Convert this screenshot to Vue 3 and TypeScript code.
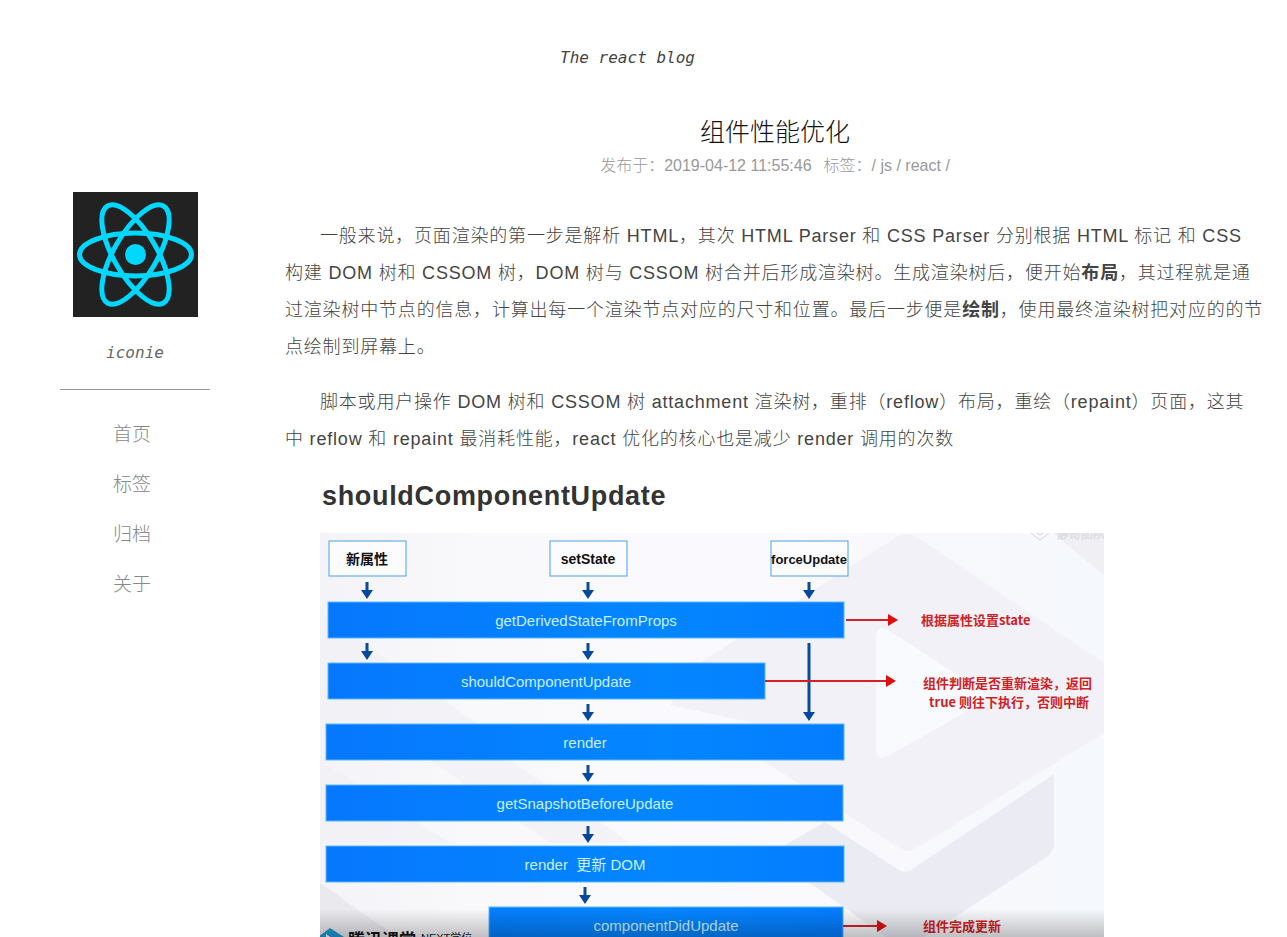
<script setup lang="ts">
interface Step {
  x: number
  y: number
  width: number
  label: string
  labelX: number
}

const navItems: string[] = ['首页', '标签', '归档', '关于']

const triggers = [
  { x: 9, label: '新属性', compact: false },
  { x: 230, label: 'setState', compact: false },
  { x: 451, label: 'forceUpdate', compact: true },
]

const steps: Step[] = [
  { x: 8, y: 69, width: 516, label: 'getDerivedStateFromProps', labelX: 266 },
  { x: 8, y: 130, width: 437, label: 'shouldComponentUpdate', labelX: 226 },
  { x: 6, y: 191, width: 518, label: 'render', labelX: 265 },
  { x: 6, y: 252, width: 517, label: 'getSnapshotBeforeUpdate', labelX: 265 },
  { x: 6, y: 313, width: 518, label: 'render  更新 DOM', labelX: 265 },
  { x: 169, y: 374, width: 354, label: 'componentDidUpdate', labelX: 346 },
]

const downArrows: [number, number][] = [
  [47, 49], [268, 49], [489, 49],
  [47, 110], [268, 110],
  [268, 171], [268, 232], [268, 293], [265, 354],
]

const redArrows: [number, number, number][] = [
  [526, 87, 578],
  [445, 148, 576],
  [523, 393, 567],
]

const notes = [
  { x: 601, y: 92, text: '根据属性设置state' },
  { x: 603, y: 155, text: '组件判断是否重新渲染，返回' },
  { x: 609, y: 174, text: 'true 则往下执行，否则中断' },
  { x: 603, y: 398, text: '组件完成更新' },
]
</script>

<template>
  <div class="page">
    <header class="site-header">The react blog</header>
    <div class="layout">
      <aside class="sidebar">
        <svg class="avatar" viewBox="0 0 125 125" role="img" aria-label="React">
          <rect width="125" height="125" fill="#222" />
          <circle cx="62.5" cy="62.5" r="10.5" fill="#00d8ff" />
          <g fill="none" stroke="#00d8ff" stroke-width="5">
            <ellipse cx="62.5" cy="62.5" rx="56" ry="21.5" />
            <ellipse cx="62.5" cy="62.5" rx="56" ry="21.5" transform="rotate(60 62.5 62.5)" />
            <ellipse cx="62.5" cy="62.5" rx="56" ry="21.5" transform="rotate(120 62.5 62.5)" />
          </g>
        </svg>
        <p class="author">iconie</p>
        <nav class="nav">
          <a v-for="item in navItems" :key="item" href="#">{{ item }}</a>
        </nav>
      </aside>
      <main class="post">
        <h1>组件性能优化</h1>
        <p class="meta">
          <span>发布于：2019-04-12 11:55:46</span>
          <span>标签：/ <a href="#">js</a> / <a href="#">react</a> /</span>
        </p>
        <article class="content">
          <p>一般来说，页面渲染的第一步是解析 HTML，其次 HTML Parser 和 CSS Parser 分别根据 HTML 标记 和 CSS 构建 DOM 树和 CSSOM 树，DOM 树与 CSSOM 树合并后形成渲染树。生成渲染树后，便开始<strong>布局</strong>，其过程就是通过渲染树中节点的信息，计算出每一个渲染节点对应的尺寸和位置。最后一步便是<strong>绘制</strong>，使用最终渲染树把对应的的节点绘制到屏幕上。</p>
          <p>脚本或用户操作 DOM 树和 CSSOM 树 attachment 渲染树，重排（reflow）布局，重绘（repaint）页面，这其中&nbsp;reflow 和 repaint 最消耗性能，react 优化的核心也是减少 render 调用的次数</p>
          <h2>shouldComponentUpdate</h2>
          <svg class="diagram" viewBox="0 0 784 441" role="img" aria-label="shouldComponentUpdate">
            <defs>
              <linearGradient id="base" x1="0" x2="1" y1="0" y2="0">
                <stop offset="0" stop-color="#f4f4f8" />
                <stop offset="0.2" stop-color="#f9f9fc" />
                <stop offset="0.6" stop-color="#faf9fd" />
                <stop offset="1" stop-color="#f5f8fc" />
              </linearGradient>
              <linearGradient id="bar" x1="0" x2="524" y1="0" y2="0" gradientUnits="userSpaceOnUse">
                <stop offset="0" stop-color="#0677fd" />
                <stop offset="0.65" stop-color="#0486ff" />
                <stop offset="1" stop-color="#057dff" />
              </linearGradient>
              <linearGradient id="shade" x1="0" x2="0" y1="0" y2="1">
                <stop offset="0" stop-color="#000" stop-opacity="0" />
                <stop offset="0.45" stop-color="#000" stop-opacity="0.24" />
                <stop offset="1" stop-color="#000" stop-opacity="0.5" />
              </linearGradient>
            </defs>
            <rect width="784" height="441" fill="url(#base)" />
            <path d="M0 80 165 196 0 196Z M0 228 130 310 0 310Z M100 220H180L310 310H230Z" fill="#efeff5" opacity=".7" />
            <path d="M0 350 130 441H0Z" fill="#e5e4ea" opacity=".7" />
            <path d="M375 133 575 5Q585-2 597 4L784 130V200L595 316Q588 321 579 315L434 222V190L350 172Z" fill="#f2f1f8" />
            <path d="M733 0H784V42Z" fill="#efeff4" />
            <path d="M556 104Q557 91 568 97L672 164 568 223Q557 229 556 216Z" fill="#f8fafe" />
            <path d="M465 312 505 289 579 337Q587 341 594 335L734 241V311Q734 319 725 325L595 410Q585 416 574 410L490 350Z" fill="#ebecf3" />
            <g class="mark">
              <path d="m711 0 9 7 9-7M714-2l6 4 6-4" fill="none" stroke="#d4d4da" />
              <text x="737" y="5">静奇团队</text>
            </g>

            <g v-for="item in triggers" :key="item.label">
              <rect :x="item.x" y="8" width="77" height="35" fill="#fcfcff" stroke="#4b9fe9" />
              <text class="trigger" :class="{ compact: item.compact }" :x="item.x + 38" y="31">{{ item.label }}</text>
            </g>

            <g v-for="item in steps" :key="item.y">
              <rect :x="item.x" :y="item.y" :width="item.width" height="36" fill="url(#bar)" stroke="#58b9ff" />
              <text class="step" :x="item.labelX" :y="item.y + 24">{{ item.label }}</text>
            </g>

            <g stroke="#0b4a9d" fill="#0647a0">
              <path v-for="([x, y], index) in downArrows" :key="index" :d="`M${x} ${y}v8`" stroke-width="3" />
              <path v-for="([x, y], index) in downArrows" :key="`tip-${index}`" :d="`M${x - 6} ${y + 8}h12l-6 9z`" stroke="none" />
              <path d="M489 110v70" stroke-width="3" />
              <path d="M483 179h12l-6 9z" stroke="none" />
            </g>
            <g stroke="#d42125" fill="#df0f0d">
              <path v-for="[x, y, end] in redArrows" :key="y" :d="`M${x} ${y}H${end - 9}`" stroke-width="2" />
              <path v-for="[, y, end] in redArrows" :key="`tip-${y}`" :d="`M${end - 10} ${y - 6}v12l10-6z`" stroke="none" />
            </g>
            <text v-for="note in notes" :key="note.y" class="note" :x="note.x" :y="note.y">{{ note.text }}</text>

            <path d="M-2 404 10 395 24 404V421L10 430-2 421Z" fill="#1d9cd8" />
            <path d="M6 401 16 408 6 415Z" fill="#fff" />
            <text class="brand" x="28" y="413">腾讯课堂</text>
            <text class="degree" x="101" y="409">NEXT学位</text>
            <rect y="376" width="784" height="65" fill="url(#shade)" />
          </svg>
        </article>
      </main>
    </div>
  </div>
</template>

<style>
body {
  margin: 0;
  background: #fff;
}
</style>

<style scoped>
.page {
  font-family: "Liberation Sans", "Noto Sans CJK SC", sans-serif;
  font-size: 16px;
  font-weight: 300;
  color: #444;
}

.site-header {
  padding: 48px 32px 0 0;
  font: italic 16px/20px "DejaVu Sans Mono", monospace;
  text-align: center;
}

.layout {
  display: flex;
  align-items: flex-start;
}

.sidebar {
  display: flex;
  flex: none;
  flex-direction: column;
  align-items: center;
  width: 270px;
  padding-top: 124px;
}

.avatar {
  display: block;
  width: 125px;
}

.author {
  width: 150px;
  margin: 24px 0 0;
  padding-bottom: 24px;
  border-bottom: 1px solid #999;
  color: #666;
  font: italic 16px/24px "DejaVu Sans Mono", monospace;
  text-align: center;
}

.nav {
  display: flex;
  flex-direction: column;
  margin: 20px 6px 0 0;
}

.nav a {
  color: #888;
  font-size: 19px;
  line-height: 50px;
  text-decoration: none;
}

.post {
  flex: 1;
  min-width: 0;
  padding: 46px 22px 0 15px;
}

h1 {
  margin: 0;
  color: #111;
  font-size: 25px;
  font-weight: 300;
  line-height: 36px;
  text-align: center;
}

.meta {
  display: flex;
  justify-content: center;
  gap: 12px;
  margin: 4px 0 0;
  color: #999;
  line-height: 24px;
}

.meta a {
  color: inherit;
  text-decoration: none;
}

.content {
  margin-top: 40px;
  font-size: 18px;
  letter-spacing: 0.045em;
  line-height: 37px;
}

.content p {
  margin: 0 0 18px;
  text-indent: 35px;
}

.content strong {
  font-weight: 700;
}

h2 {
  margin: 0 0 17px;
  padding-left: 37px;
  color: #333;
  font-size: 27px;
  font-weight: 700;
  letter-spacing: 0.025em;
  line-height: 40px;
}

.diagram {
  display: block;
  width: 80%;
  margin-left: 35px;
  letter-spacing: normal;
}

.diagram text {
  white-space: pre;
}

.trigger {
  fill: #111;
  font-size: 14px;
  font-weight: 700;
  text-anchor: middle;
}

.trigger.compact {
  font-size: 13px;
}

.step {
  fill: #c5f0ff;
  font-size: 15px;
  font-weight: 400;
  text-anchor: middle;
}

.note {
  fill: #cf2225;
  font-family: "Noto Sans CJK SC", sans-serif;
  font-size: 13px;
  font-weight: 700;
}

.brand {
  fill: #111;
  font-size: 17px;
  font-weight: 700;
}

.degree {
  fill: #222;
  font-size: 11px;
  font-weight: 400;
}

.mark text {
  fill: #fff;
  stroke: #dedee4;
  font-size: 12px;
}
</style>
